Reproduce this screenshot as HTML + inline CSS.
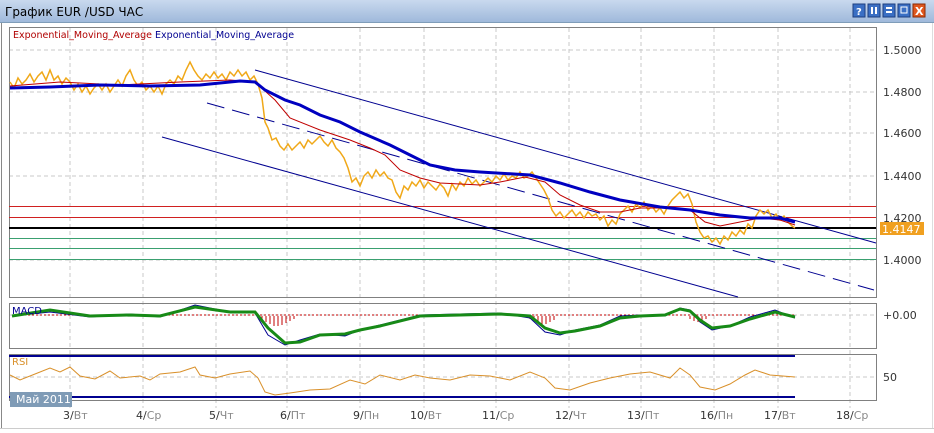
<!DOCTYPE html>
<html><head><meta charset="utf-8"><style>
body{margin:0;width:934px;height:433px;overflow:hidden;background:#fff;font-family:"Liberation Sans","DejaVu Sans",sans-serif}
svg{display:block}
text{font-family:"DejaVu Sans","Liberation Sans",sans-serif}
</style></head><body>
<svg width="934" height="433" viewBox="0 0 934 433" xmlns="http://www.w3.org/2000/svg">
<defs><linearGradient id="tb" x1="0" y1="0" x2="0" y2="1"><stop offset="0" stop-color="#c9d9ee"/><stop offset="1" stop-color="#9fb9db"/></linearGradient></defs>
<rect x="0" y="0" width="934" height="433" fill="#fff"/>
<rect x="0" y="0" width="934" height="22" fill="url(#tb)"/>
<line x1="0" y1="22.5" x2="934" y2="22.5" stroke="#7f9db9"/>
<text x="5" y="16" font-size="12" fill="#000" font-family="Liberation Sans">График EUR /USD  ЧАС</text>
<g>
<rect x="853" y="4" width="12" height="13" fill="#3a6fc4" stroke="#1d3f80"/><text x="856" y="15" font-size="10" fill="#fff" font-weight="bold">?</text>
<rect x="868" y="4" width="12" height="13" fill="#3a6fc4" stroke="#1d3f80"/><rect x="871" y="7" width="2" height="7" fill="#fff"/><rect x="875" y="7" width="2" height="7" fill="#fff"/>
<rect x="883" y="4" width="12" height="13" fill="#3a6fc4" stroke="#1d3f80"/><rect x="886" y="7" width="6" height="2" fill="#fff"/><rect x="886" y="11" width="6" height="2" fill="#fff"/>
<rect x="898" y="4" width="12" height="13" fill="#3a6fc4" stroke="#1d3f80"/><rect x="901" y="7" width="6" height="6" fill="none" stroke="#fff"/>
<rect x="913" y="4" width="12" height="13" fill="#e0581f" stroke="#8a2a05"/><text x="915" y="15" font-size="11" fill="#fff" font-weight="bold">X</text>
</g>
<line x1="1.5" y1="23" x2="1.5" y2="428" stroke="#888"/>
<line x1="0" y1="428.5" x2="934" y2="428.5" stroke="#ccc"/>
<line x1="932.5" y1="23" x2="932.5" y2="428" stroke="#ddd"/>
<g stroke="#c8c8c8" stroke-dasharray="4,3">
<line x1="70" y1="28" x2="70" y2="408"/><line x1="143" y1="28" x2="143" y2="408"/><line x1="216" y1="28" x2="216" y2="408"/><line x1="287" y1="28" x2="287" y2="408"/><line x1="360" y1="28" x2="360" y2="408"/><line x1="424" y1="28" x2="424" y2="408"/><line x1="496" y1="28" x2="496" y2="408"/><line x1="569" y1="28" x2="569" y2="408"/><line x1="641" y1="28" x2="641" y2="408"/><line x1="714" y1="28" x2="714" y2="408"/><line x1="778" y1="28" x2="778" y2="408"/><line x1="850" y1="28" x2="850" y2="408"/>
<line x1="9" y1="50" x2="876" y2="50"/><line x1="9" y1="92" x2="876" y2="92"/><line x1="9" y1="133" x2="876" y2="133"/><line x1="9" y1="176" x2="876" y2="176"/><line x1="9" y1="260" x2="876" y2="260"/>
<line x1="9" y1="315" x2="876" y2="315"/><line x1="9" y1="377" x2="876" y2="377"/>
</g>
<rect x="9.5" y="27.5" width="867" height="270" fill="none" stroke="#808080"/>
<rect x="9.5" y="303.5" width="867" height="45" fill="none" stroke="#808080"/>
<rect x="9.5" y="354.5" width="867" height="46" fill="none" stroke="#808080"/>
<text x="13" y="38" font-size="9.5" fill="#b00000">Exponential_Moving_Average <tspan fill="#000090">Exponential_Moving_Average</tspan></text>
<g font-size="11" fill="#333">
<text x="883" y="54">1.5000</text><text x="883" y="96">1.4800</text><text x="883" y="137">1.4600</text><text x="883" y="180">1.4400</text><text x="883" y="222">1.4200</text><text x="883" y="264">1.4000</text>
<text x="883" y="319">+0.00</text><text x="883" y="381">50</text>
</g>
<line x1="9" y1="206.5" x2="876" y2="206.5" stroke="#d02020"/>
<line x1="9" y1="217.5" x2="876" y2="217.5" stroke="#d02020"/>
<line x1="9" y1="238.5" x2="876" y2="238.5" stroke="#3aa070"/>
<line x1="9" y1="248.5" x2="876" y2="248.5" stroke="#3aa070"/>
<line x1="9" y1="259.5" x2="876" y2="259.5" stroke="#3aa070"/>
<line x1="9" y1="228" x2="876" y2="228" stroke="#000" stroke-width="2"/>
<rect x="880" y="222" width="44" height="13" fill="#f0a020"/><text x="882" y="233" font-size="11" fill="#fff">1.4147</text>
<g stroke="#000090" stroke-width="1">
<line x1="255" y1="70" x2="876" y2="243"/>
<line x1="207" y1="103" x2="874" y2="290" stroke-dasharray="18,8"/>
<line x1="162" y1="137" x2="738" y2="297"/>
</g>
<polyline fill="none" stroke="#f0a818" stroke-width="1.5" points="10,82 14,88 18,78 22,84 26,80 30,74 34,82 38,76 42,72 46,80 50,70 54,80 58,76 62,84 66,78 70,82 74,90 78,84 82,92 86,86 90,94 94,88 98,84 102,90 106,84 110,92 114,86 118,80 122,86 126,76 130,70 134,80 138,86 142,82 146,90 150,86 154,92 158,86 162,94 166,84 170,80 174,84 178,76 182,80 186,70 190,62 194,70 198,76 202,80 206,74 210,78 214,72 218,78 222,74 226,80 230,72 234,76 238,70 242,76 246,72 250,80 254,76 258,84 262,98 265,122 268,128 272,140 276,138 280,146 284,150 288,144 292,150 296,146 300,142 304,148 308,140 312,144 316,140 320,136 324,142 328,146 332,140 336,148 340,152 344,158 348,168 352,182 356,178 360,186 364,176 368,172 372,178 376,170 380,176 384,172 388,178 392,180 396,192 400,198 404,186 408,190 412,182 416,186 420,180 424,188 428,182 432,186 436,190 440,184 444,188 448,196 452,184 456,190 460,182 464,186 468,178 472,184 476,180 480,186 484,182 488,178 492,182 496,176 500,180 504,174 508,180 512,176 516,178 520,172 524,178 528,176 532,172 536,178 540,184 544,190 548,198 552,210 556,216 560,212 564,218 568,214 572,210 576,216 580,212 584,218 588,212 592,216 596,214 600,220 604,216 608,226 612,220 616,224 620,214 624,210 628,206 632,212 636,204 640,208 644,202 648,210 652,206 656,212 660,208 664,214 668,206 672,200 676,196 680,192 684,198 688,194 692,204 696,222 700,232 704,238 708,236 712,242 716,238 720,244 724,236 728,240 732,232 736,236 740,230 744,234 748,224 752,228 756,216 760,210 764,214 768,210 772,218 776,214 780,220 784,216 788,222 792,226 795,228"/>
<polyline fill="none" stroke="#c00000" stroke-width="1" points="10,86 60,82 120,85 180,82 230,80 255,82 275,100 290,118 320,130 350,140 370,148 385,155 400,170 420,178 440,183 480,185 500,182 525,177 545,182 560,195 580,205 600,212 620,212 640,208 670,208 690,210 705,222 720,226 740,222 760,218 780,220 795,225"/>
<polyline fill="none" stroke="#0000c0" stroke-width="3" points="10,88 50,87 100,85 150,86 200,85 240,81 255,82 265,90 285,100 300,105 320,115 340,122 360,132 390,145 410,155 430,165 455,170 480,172 530,175 560,183 590,192 620,200 660,207 690,210 720,215 750,218 780,218 795,222"/>
<g stroke="#c00000" stroke-width="1">
<path d="M262 316v3M266 316v6M270 316v8M274 316v10M278 316v10M282 316v9M286 316v7M290 316v5M294 316v3M530 316v3M534 316v6M538 316v8M542 316v9M546 316v8M550 316v6M554 316v4M690 316v3M694 316v5M698 316v6M702 316v5M706 316v3"/>
</g>
<line x1="12" y1="315" x2="795" y2="315" stroke="#c00000" stroke-dasharray="2,2"/>
<polyline fill="none" stroke="#000090" stroke-width="1" points="12,316 50,312 90,317 130,314 160,317 195,305 230,312 255,313 268,335 285,345 300,340 320,334 345,336 360,330 380,325 420,315 500,313 530,318 545,332 560,335 575,330 600,325 620,316 640,315 665,316 680,308 690,310 700,322 712,330 730,326 750,317 775,310 795,318"/>
<polyline fill="none" stroke="#178a17" stroke-width="3" points="12,316 50,310 90,316 130,315 160,316 195,307 230,312 255,312 268,328 285,343 300,342 320,335 345,334 360,330 380,326 420,316 500,314 530,316 545,328 560,333 575,331 600,326 620,318 640,316 665,315 680,309 690,311 700,320 712,328 730,326 750,319 775,312 795,317"/>
<text x="12" y="314" font-size="10" fill="#000090">MACD</text>
<line x1="9" y1="356" x2="795" y2="356" stroke="#000090" stroke-width="2"/>
<line x1="9" y1="397" x2="795" y2="397" stroke="#000090" stroke-width="2"/>
<polyline fill="none" stroke="#d9902a" stroke-width="1" points="10,375 20,380 35,374 50,368 60,372 70,367 80,376 95,379 110,371 120,378 140,376 150,380 160,374 180,372 195,367 200,375 215,378 230,374 250,371 258,378 265,392 275,395 290,393 310,390 330,389 350,380 365,384 380,375 400,380 415,375 430,378 450,380 470,375 490,376 510,380 530,372 545,378 555,388 570,390 590,383 610,378 630,374 650,372 670,378 680,368 690,375 700,387 715,390 730,384 745,375 755,370 770,375 795,377"/>
<text x="12" y="365" font-size="10" fill="#d9902a">RSI</text>
<rect x="10" y="392" width="62" height="15" fill="#7f9bb6"/>
<text x="16" y="403" font-size="11" fill="#fff">Май 2011</text>
<g font-size="11" fill="#333">
<text x="63" y="419">3/<tspan fill="#888">Вт</tspan></text>
<text x="136" y="419">4/<tspan fill="#888">Ср</tspan></text>
<text x="209" y="419">5/<tspan fill="#888">Чт</tspan></text>
<text x="280" y="419">6/<tspan fill="#888">Пт</tspan></text>
<text x="353" y="419">9/<tspan fill="#888">Пн</tspan></text>
<text x="410" y="419">10/<tspan fill="#888">Вт</tspan></text>
<text x="482" y="419">11/<tspan fill="#888">Ср</tspan></text>
<text x="555" y="419">12/<tspan fill="#888">Чт</tspan></text>
<text x="627" y="419">13/<tspan fill="#888">Пт</tspan></text>
<text x="700" y="419">16/<tspan fill="#888">Пн</tspan></text>
<text x="764" y="419">17/<tspan fill="#888">Вт</tspan></text>
<text x="836" y="419">18/<tspan fill="#888">Ср</tspan></text>
</g>
</svg>
</body></html>
